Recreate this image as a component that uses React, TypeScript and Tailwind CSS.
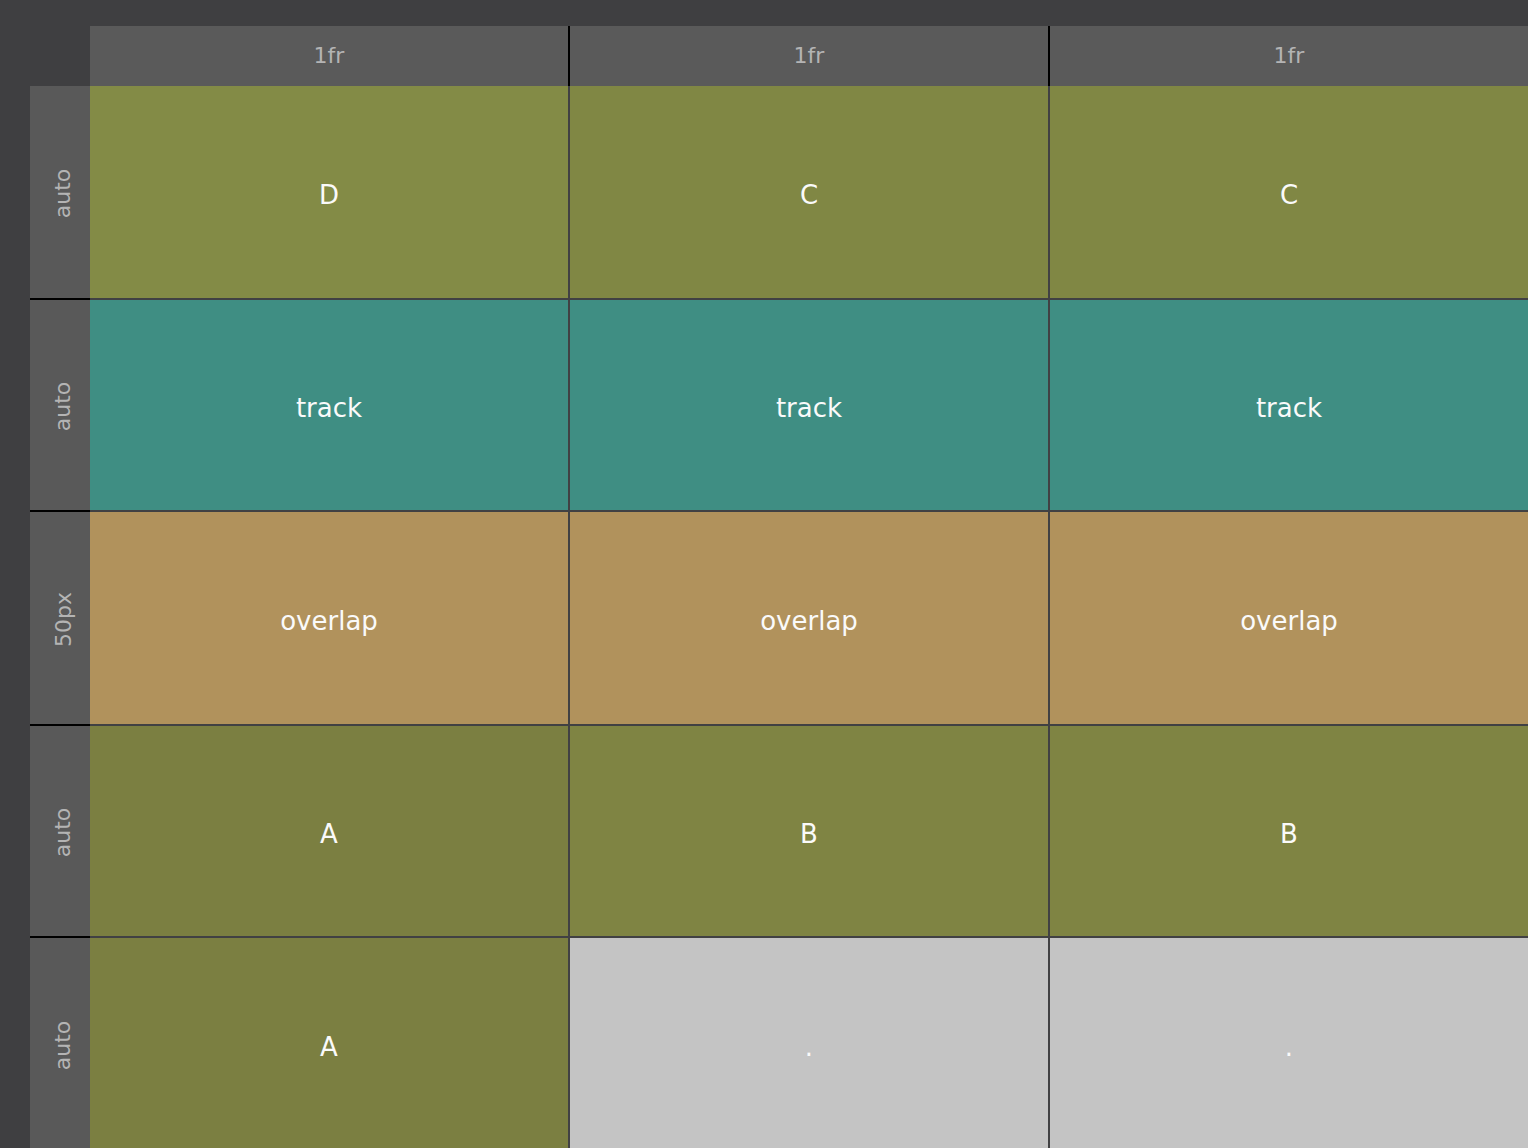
import React from "react";

const COLS = ["1fr", "1fr", "1fr"];
const ROWS = [
  { label: "auto", h: "h-[212px]" },
  { label: "auto", h: "h-[210px]" },
  { label: "50px", h: "h-[212px]" },
  { label: "auto", h: "h-[210px]" },
  { label: "auto", h: "h-[212px]" },
];

// area name + cell colour, row by row
const CELLS: { label: string; bg: string }[][] = [
  [
    { label: "D", bg: "bg-[#838b46]" },
    { label: "C", bg: "bg-[#808744]" },
    { label: "C", bg: "bg-[#808744]" },
  ],
  [
    { label: "track", bg: "bg-[#3f8e83]" },
    { label: "track", bg: "bg-[#3f8e83]" },
    { label: "track", bg: "bg-[#3f8e83]" },
  ],
  [
    { label: "overlap", bg: "bg-[#b1925c]" },
    { label: "overlap", bg: "bg-[#b1925c]" },
    { label: "overlap", bg: "bg-[#b1925c]" },
  ],
  [
    { label: "A", bg: "bg-[#7b7f41]" },
    { label: "B", bg: "bg-[#7f8443]" },
    { label: "B", bg: "bg-[#7f8443]" },
  ],
  [
    { label: "A", bg: "bg-[#7b7f41]" },
    { label: ".", bg: "bg-[#c4c4c4]" },
    { label: ".", bg: "bg-[#c4c4c4]" },
  ],
];

export default function App() {
  return (
    <div
      className="h-screen w-full overflow-hidden bg-[#3f3f41] pt-[26px] pl-[30px]"
      style={{ fontFamily: '"DejaVu Sans", Verdana, sans-serif' }}
    >
      <div className="flex">
        {/* Row track labels */}
        <div className="w-[60px] shrink-0 flex flex-col">
          <div className="h-[60px]" />
          <div className="flex flex-col gap-[2px] bg-black">
            {ROWS.map((r, i) => (
              <div
                key={i}
                className={`${r.h} bg-[#595959] flex items-center justify-center pl-[6px] pt-[2px]`}
              >
                <span className="inline-block -rotate-90 whitespace-nowrap text-[22px] text-[#b4b4b4]">
                  {r.label}
                </span>
              </div>
            ))}
          </div>
        </div>

        <div className="flex-1 min-w-0 flex flex-col">
          {/* Column track labels */}
          <div className="h-[60px] flex gap-[2px] bg-black">
            {COLS.map((c, i) => (
              <div
                key={i}
                className="flex-1 bg-[#5a5a5a] flex items-center justify-center pb-[2px] text-[22px] text-[#b4b4b4]"
              >
                {c}
              </div>
            ))}
          </div>

          {/* Grid areas */}
          <div className="flex flex-col gap-[2px] bg-[#414143]">
            {CELLS.map((row, r) => (
              <div key={r} className={`grid grid-cols-3 gap-[2px] ${ROWS[r].h}`}>
                {row.map((cell, i) => (
                  <div
                    key={i}
                    className={`flex items-center justify-center pt-[6px] text-[26px] text-[#fafafa] ${cell.bg}`}
                  >
                    {cell.label}
                  </div>
                ))}
              </div>
            ))}
          </div>
        </div>
      </div>
    </div>
  );
}
